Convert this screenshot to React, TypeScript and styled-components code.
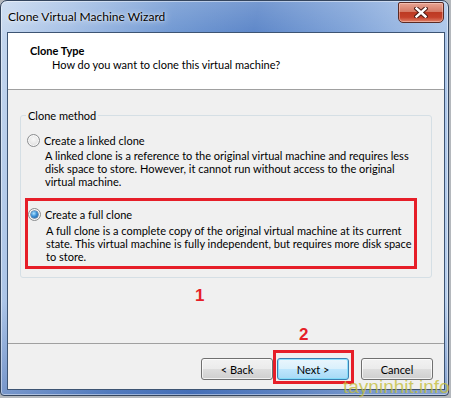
import React from 'react';
import styled, { createGlobalStyle } from 'styled-components';

const GlobalStyle = createGlobalStyle`
  html, body {
    margin: 0;
    padding: 0;
  }
  body {
    width: 451px;
    height: 398px;
    overflow: hidden;
    background: #b4b8bd;
    font-family: Lato, 'Liberation Sans', sans-serif;
    font-size: 11px;
    color: #000;
  }
`;

function Radio({ checked }: { checked?: boolean }) {
  return (
    <RadioCircle>
      {checked && <RadioDot />}
    </RadioCircle>
  );
}

function CloseGlyph() {
  return (
    <svg width="14" height="11" viewBox="0 0 14 11">
      <path d="M2.5 1.5 L11.5 9.5 M11.5 1.5 L2.5 9.5" stroke="#4a1a14" strokeWidth="4.4" strokeLinecap="square" />
      <path d="M2.5 1.5 L11.5 9.5 M11.5 1.5 L2.5 9.5" stroke="#fff" strokeWidth="2.4" strokeLinecap="square" />
    </svg>
  );
}

export default function App() {
  return (
    <>
      <GlobalStyle />
      <Page>
        <Window>
          <TitleBar>
            <TitleText>Clone Virtual Machine Wizard</TitleText>
            <CloseButton>
              <CloseGlyph />
            </CloseButton>
          </TitleBar>
          <Client>
            <Header>
              <HeaderTitle>Clone Type</HeaderTitle>
              <HeaderSubtitle>How do you want to clone this virtual machine?</HeaderSubtitle>
            </Header>
            <Body>
              <GroupBox>
                <Legend>Clone method</Legend>
                <Option>
                  <OptionLabel>
                    <Radio />
                    Create a linked clone
                  </OptionLabel>
                  <OptionText>
                    A linked clone is a reference to the original virtual machine and requires less
                    <br />
                    disk space to store. However, it cannot run without access to the original
                    <br />
                    virtual machine.
                  </OptionText>
                </Option>
                <Option $highlighted>
                  <OptionLabel>
                    <Radio checked />
                    Create a full clone
                  </OptionLabel>
                  <OptionText>
                    A full clone is a complete copy of the original virtual machine at its current
                    <br />
                    state. This virtual machine is fully independent, but requires more disk space
                    <br />
                    to store.
                  </OptionText>
                </Option>
              </GroupBox>
              <StepMark>1</StepMark>
            </Body>
            <Footer>
              <Button>&lt; Back</Button>
              <Highlight>
                <Button $default>Next &gt;</Button>
                <HighlightMark>2</HighlightMark>
              </Highlight>
              <Button $spaced>Cancel</Button>
            </Footer>
          </Client>
        </Window>
        <Watermark>tayninhit.info</Watermark>
      </Page>
    </>
  );
}

const Page = styled.div`
  position: relative;
  width: 451px;
  height: 398px;
`;

const Window = styled.div`
  width: 449px;
  height: 396px;
  box-sizing: border-box;
  display: flex;
  flex-direction: column;
  border: 1px solid #34455e;
  border-radius: 7px 7px 4px 4px;
  background:
    linear-gradient(to bottom, rgba(255, 255, 255, 0.18) 0, rgba(255, 255, 255, 0) 40px),
    linear-gradient(to bottom, rgba(0, 0, 0, 0) 300px, rgba(30, 70, 150, 0.35) 396px),
    linear-gradient(100deg, #c6d8ef 0%, #a4bfe5 14%, #6c95d1 34%, #5883c7 50%, #7ba0d7 68%, #a8c3e8 86%, #bcd2ee 100%);
  box-shadow: inset 0 0 0 1px rgba(255, 255, 255, 0.45);
`;

const TitleBar = styled.div`
  height: 31px;
  display: flex;
  align-items: flex-start;
  justify-content: space-between;
  padding-left: 7px;
`;

const TitleText = styled.div`
  font-family: Lato, 'Liberation Sans', sans-serif;
  font-size: 12px;
  line-height: 14px;
  margin-top: 9px;
  color: #000;
  text-shadow: 0 0 6px rgba(255, 255, 255, 0.9), 0 0 2px rgba(255, 255, 255, 0.8);
`;

const CloseButton = styled.div`
  width: 46px;
  height: 21px;
  margin: 1px 4px 0 0;
  box-sizing: border-box;
  display: flex;
  align-items: center;
  justify-content: center;
  border: 1px solid #5a2a24;
  border-radius: 2px 2px 5px 5px;
  background: linear-gradient(to bottom, #e8a493 0%, #d57a66 45%, #bd3a23 50%, #c4402a 75%, #e0826a 100%);
  box-shadow: inset 0 0 0 1px rgba(255, 220, 210, 0.45);
`;

const Client = styled.div`
  flex: 1;
  margin: 0 3px 5px 6px;
  display: flex;
  flex-direction: column;
  border: 1px solid #3d5473;
  background: #f0f0f0;
`;

const Header = styled.div`
  height: 57px;
  box-sizing: border-box;
  padding: 11px 0 0 22px;
  background: #fff;
  border-bottom: 1px solid #a0a0a0;
`;

const HeaderTitle = styled.div`
  font-weight: 700;
  line-height: 13px;
`;

const HeaderSubtitle = styled.div`
  margin: 1px 0 0 22px;
  line-height: 13px;
`;

const Body = styled.div`
  flex: 1;
  padding: 19px 12px 0;
  display: flex;
  flex-direction: column;
`;

const GroupBox = styled.fieldset`
  margin: 0;
  padding: 12px 14px 8px 6px;
  border: 1px solid #d5dfe5;
  border-radius: 3px;
  display: flex;
  flex-direction: column;
  min-width: 0;
`;

const Legend = styled.legend`
  padding: 0 2px;
  margin-left: -1px;
  line-height: 13px;
`;

const Option = styled.div<{ $highlighted?: boolean }>`
  display: flex;
  flex-direction: column;
  gap: ${(p) => (p.$highlighted ? 3 : 2)}px;
  ${(p) =>
    p.$highlighted &&
    `
    margin: 10px 0 0 -2px;
    padding: 7px 0 3px 0;
    border: 3px solid #e61e28;
  `}
`;

const OptionLabel = styled.div`
  display: flex;
  align-items: center;
  gap: 4px;
  line-height: 13px;
`;

const OptionText = styled.div`
  padding-left: 18px;
  line-height: 13px;
  white-space: nowrap;
`;

const RadioCircle = styled.span`
  width: 13px;
  height: 13px;
  box-sizing: border-box;
  border-radius: 50%;
  border: 1px solid #8b8d8f;
  background: radial-gradient(circle at 50% 40%, #f8f8f8 0%, #e6e6e6 55%, #cfd0d1 100%);
  box-shadow: inset 0 0 0 1px rgba(255, 255, 255, 0.8);
  display: flex;
  align-items: center;
  justify-content: center;
  flex-shrink: 0;
`;

const RadioDot = styled.span`
  width: 7px;
  height: 7px;
  border-radius: 50%;
  background: radial-gradient(circle at 40% 35%, #b4e6ff 0%, #3c92d9 45%, #144e91 100%);
  box-shadow: 0 0 0 0.5px #1c4f83;
`;

const StepMark = styled.div`
  margin: 9px 0 0 175px;
  font-family: 'Liberation Sans', Arial, sans-serif;
  font-weight: 700;
  font-size: 17px;
  line-height: 17px;
  color: #e61e28;
`;

const Footer = styled.div`
  height: 46px;
  box-sizing: border-box;
  padding: 14px 11px 0 0;
  border-top: 1px solid #a0a0a0;
  display: flex;
  justify-content: flex-end;
  align-items: flex-start;
  gap: 4px;
`;

const Button = styled.div<{ $default?: boolean; $spaced?: boolean }>`
  width: 72px;
  height: 22px;
  box-sizing: border-box;
  display: flex;
  align-items: center;
  justify-content: center;
  border-radius: 3px;
  margin-left: ${(p) => (p.$spaced ? 8 : 0)}px;
  border: 1px solid ${(p) => (p.$default ? '#3c7fb1' : '#707070')};
  background: ${(p) =>
    p.$default
      ? 'linear-gradient(to bottom, #eaf6fd 0%, #d9f0fc 50%, #bee6fd 51%, #a7d9f5 100%)'
      : 'linear-gradient(to bottom, #f2f2f2 0%, #ebebeb 50%, #dddddd 51%, #cfcfcf 100%)'};
  box-shadow: inset 0 0 0 1px ${(p) => (p.$default ? 'rgba(120, 220, 250, 0.8)' : 'rgba(255, 255, 255, 0.7)')};
  color: #000;
`;

const Highlight = styled.div`
  position: relative;
  &::after {
    content: '';
    position: absolute;
    top: -8px;
    right: -5px;
    bottom: -4px;
    left: -4px;
    border: 3px solid #e61e28;
  }
`;

const HighlightMark = styled.div`
  position: absolute;
  left: 22px;
  top: -32px;
  font-family: 'Liberation Sans', Arial, sans-serif;
  font-weight: 700;
  font-size: 17px;
  line-height: 17px;
  color: #e61e28;
`;

const Watermark = styled.div`
  position: absolute;
  left: 343px;
  top: 376px;
  font-family: 'Liberation Sans', Arial, sans-serif;
  font-size: 19px;
  line-height: 22px;
  color: rgba(196, 190, 60, 0.8);
  white-space: nowrap;
`;
